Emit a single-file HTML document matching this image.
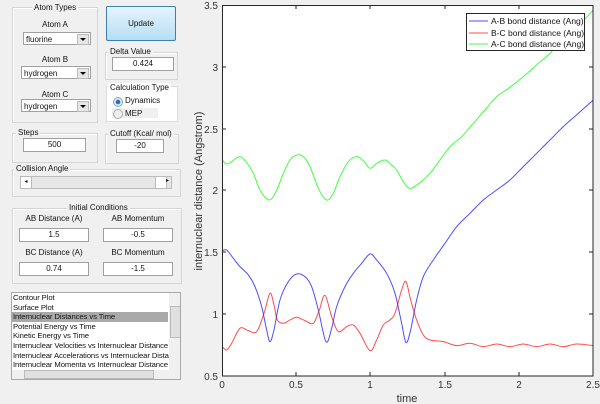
<!DOCTYPE html>
<html><head><style>
body{margin:0;width:600px;height:404px;background:#f0f0f0;position:relative;overflow:hidden;font-family:"Liberation Sans",Arial,sans-serif;font-size:8px;color:#111}
.a{position:absolute}
.g{position:absolute;border:1px solid #d5d5d5;box-shadow:1px 1px 0 #fff inset}
.lg{position:absolute;background:#f0f0f0;padding:0 2px;font-size:8px;line-height:9px}
.inp{position:absolute;background:#fff;border:1px solid #a0a0a0;text-align:center;font-size:8px;line-height:12px;height:12px}
.sel{position:absolute;background:#fff;border:1px solid #a0a0a0;height:13px;font-size:8px;line-height:13px;padding-left:2px;box-sizing:border-box}
.sel b{position:absolute;right:1px;top:1px;width:10px;height:9px;background:#e6e6e6;border:1px solid #bbb}
.sel b:after{content:"";position:absolute;left:2px;top:3px;border:3px solid transparent;border-top:3px solid #000;border-bottom:0}
.c{position:absolute;text-align:center;font-size:8px}
</style></head><body>
<div class="g" style="left:12px;top:7px;width:84px;height:114px"></div>
<div class="lg" style="left:32px;top:3px">Atom Types</div>
<div class="c" style="left:12px;top:20px;width:86px">Atom A</div>
<div class="sel" style="left:23px;top:32px;width:68px">fluorine<b></b></div>
<div class="c" style="left:12px;top:55px;width:86px">Atom B</div>
<div class="sel" style="left:21px;top:66px;width:70px">hydrogen<b></b></div>
<div class="c" style="left:12px;top:90px;width:86px">Atom C</div>
<div class="sel" style="left:21px;top:99px;width:70px">hydrogen<b></b></div>
<div class="a" style="left:106px;top:6px;width:68px;height:33px;border:1px solid #3c7fb1;border-radius:2px;background:linear-gradient(#e5f4fc,#b6def5);text-align:center;line-height:33px;font-size:8px">Update</div>
<div class="g" style="left:105px;top:52px;width:71px;height:26px"></div>
<div class="lg" style="left:108px;top:47px">Delta Value</div>
<div class="inp" style="left:112px;top:57px;width:60px">0.424</div>
<div class="a" style="left:106px;top:86px;width:70px;height:34px;background:#fff;border:1px solid #ddd"></div>
<div class="a" style="left:108px;top:83px;background:#fff;padding:0 2px;line-height:9px">Calculation Type</div>
<div class="a" style="left:113px;top:97px;width:8px;height:8px;border-radius:50%;background:radial-gradient(#2a6fb5 35%,#dbe9f5 45%);border:1px solid #8aa"></div>
<div class="a" style="left:125px;top:96px">Dynamics</div>
<div class="a" style="left:112px;top:108px;width:46px;height:10px;background:#f0f0f0"></div>
<div class="a" style="left:113px;top:109px;width:8px;height:8px;border-radius:50%;background:#eee;border:1px solid #aaa"></div>
<div class="a" style="left:125px;top:109px">MEP</div>
<div class="g" style="left:12px;top:133px;width:84px;height:28px"></div>
<div class="lg" style="left:16px;top:128px">Steps</div>
<div class="inp" style="left:23px;top:138px;width:61px">500</div>
<div class="g" style="left:105px;top:134px;width:72px;height:28px"></div>
<div class="lg" style="left:108px;top:129px">Cutoff (Kcal/ mol)</div>
<div class="inp" style="left:116px;top:139px;width:46px">-20</div>
<div class="g" style="left:12px;top:169px;width:167px;height:26px"></div>
<div class="lg" style="left:14px;top:164px">Collision Angle</div>
<div class="a" style="left:20px;top:176px;width:150px;height:11px;background:#e6e6e6;border:1px solid #bbb"></div>
<div class="a" style="left:20px;top:176px;width:10px;height:11px;background:#fff;border:1px solid #bbb;font-size:6px;text-align:center;line-height:11px">◂</div>
<div class="a" style="left:155px;top:176px;width:10px;height:11px;background:#fff;border:1px solid #bbb"></div>
<div class="a" style="left:166px;top:176px;width:4px;height:11px;font-size:6px;line-height:11px">▸</div>
<div class="g" style="left:12px;top:208px;width:168px;height:74px"></div>
<div class="lg" style="left:67px;top:203px">Initial Conditions</div>
<div class="c" style="left:12px;top:214px;width:84px">AB Distance (A)</div>
<div class="c" style="left:96px;top:214px;width:84px">AB Momentum</div>
<div class="inp" style="left:19px;top:228px;width:68px">1.5</div>
<div class="inp" style="left:103px;top:228px;width:68px">-0.5</div>
<div class="c" style="left:12px;top:248px;width:84px">BC Distance (A)</div>
<div class="c" style="left:96px;top:248px;width:84px">BC Momentum</div>
<div class="inp" style="left:19px;top:262px;width:68px">0.74</div>
<div class="inp" style="left:103px;top:262px;width:68px">-1.5</div>
<div class="a" style="left:11px;top:292px;width:168px;height:86px;background:#fff;border:1px solid #a8a8a8;overflow:hidden;line-height:9.6px;font-size:7.7px;white-space:nowrap;letter-spacing:-0.1px">
<div style="padding-left:1px">Contour Plot</div>
<div style="padding-left:1px">Surface Plot</div>
<div style="padding-left:1px;background:#a9a9a9;width:155px">Internuclear Distances vs Time</div>
<div style="padding-left:1px">Potential Energy vs Time</div>
<div style="padding-left:1px">Kinetic Energy vs Time</div>
<div style="padding-left:1px">Internuclear Velocities vs Internuclear Distance</div>
<div style="padding-left:1px">Internuclear Accelerations vs Internuclear Dista</div>
<div style="padding-left:1px">Internuclear Momenta vs Internuclear Distance</div>
<div class="a" style="left:157px;top:0;width:11px;height:77px;background:#f0f0f0"></div>
<div class="a" style="left:158px;top:13px;width:9px;height:30px;background:#e0e0e0;border:1px solid #bbb"></div>
<div class="a" style="left:0;top:77px;width:168px;height:9px;background:#f0f0f0"></div>
<div class="a" style="left:12px;top:77px;width:128px;height:7px;background:#e0e0e0;border:1px solid #bbb"></div>
</div>
<div class="a" style="left:222px;top:5px;width:371px;height:371px;background:#fff"></div>
<svg class="a" style="left:0;top:0" width="600" height="404" viewBox="0 0 600 404">
<g transform="translate(190,0) scale(0.3333)" fill="none" stroke-width="3" stroke-linejoin="round">
<path class="cv" stroke="#0000ff" stroke-opacity="0.7" d="M97,752 L110,750 L130,775 L150,800 L175,825 L195,860 L215,920 L230,990 L240,1025 L252,990 L270,900 L295,845 L320,822 L345,830 L365,860 L385,930 L408,1025 L425,985 L440,920 L465,860 L490,820 L515,790 L540,762 L560,780 L590,820 L615,880 L635,970 L648,1028 L662,990 L680,900 L700,830 L730,780 L765,730 L800,680 L840,640 L880,600 L920,570 L960,540 L1000,500 L1040,460 L1080,420 L1120,380 L1165,340 L1210,300"/>
<path class="cv" stroke="#ff0000" stroke-opacity="0.7" d="M97,1040 L110,1050 L125,1030 L150,985 L175,992 L200,995 L222,940 L240,880 L252,915 L262,960 L280,970 L300,960 L320,952 L345,962 L370,970 L388,930 L405,886 L425,950 L445,995 L470,980 L490,975 L510,1000 L540,1052 L560,1020 L580,975 L600,960 L615,940 L635,870 L648,845 L662,900 L680,960 L700,1005 L720,1020 L760,1025 L800,1037 L840,1030 L880,1040 L920,1032 L960,1040 L1000,1032 L1040,1040 L1080,1032 L1120,1040 L1160,1032 L1210,1037"/>
<path class="cv" stroke="#00ff00" stroke-opacity="0.75" d="M97,480 L110,492 L125,485 L150,470 L170,488 L190,520 L210,570 L237,600 L258,575 L280,520 L300,480 L320,465 L340,470 L360,500 L385,565 L410,600 L430,580 L450,530 L475,485 L500,470 L520,482 L540,505 L560,490 L585,480 L605,495 L620,510 L640,545 L660,565 L690,548 L720,520 L750,480 L780,440 L815,410 L850,370 L885,330 L920,290 L960,262 L1000,230 L1040,195 L1080,160 L1115,125 L1150,90 L1180,62 L1210,30"/>
</g>
<rect x="222.5" y="5.5" width="370.5" height="370.5" fill="none" stroke="#262626" stroke-width="1"/>
<g stroke="#262626">
<path d="M222,67 h4 M222,129 h4 M222,190 h4 M222,252 h4 M222,314 h4 M593,67 h-4 M593,129 h-4 M593,190 h-4 M593,252 h-4 M593,314 h-4 M296,376 v-4 M370,376 v-4 M445,376 v-4 M519,376 v-4 M296,5 v4 M370,5 v4 M445,5 v4 M519,5 v4"/>
</g>
<rect x="466.5" y="13.5" width="118" height="37" fill="#fff" stroke="#262626"/>
<path d="M469,21 h19" stroke="#0000ff" stroke-opacity="0.7"/>
<path d="M469,33 h19" stroke="#ff0000" stroke-opacity="0.7"/>
<path d="M469,44 h19" stroke="#00ff00" stroke-opacity="0.75"/>
<g font-family="Liberation Sans,Arial,sans-serif" font-size="8.5" fill="#111">
<text x="491" y="24">A-B bond distance (Ang)</text>
<text x="491" y="36">B-C bond distance (Ang)</text>
<text x="491" y="47">A-C bond distance (Ang)</text>
</g>
<g font-family="Liberation Sans,Arial,sans-serif" font-size="10" fill="#333" text-anchor="end">
<text x="218" y="9">3.5</text><text x="218" y="71">3</text><text x="218" y="133">2.5</text><text x="218" y="194">2</text><text x="218" y="256">1.5</text><text x="218" y="318">1</text><text x="218" y="380">0.5</text>
</g>
<g font-family="Liberation Sans,Arial,sans-serif" font-size="10" fill="#333" text-anchor="middle">
<text x="222" y="388">0</text><text x="296" y="388">0.5</text><text x="370" y="388">1</text><text x="445" y="388">1.5</text><text x="519" y="388">2</text><text x="593" y="388">2.5</text>
<text x="407" y="402" font-size="11">time</text>
<text transform="translate(202,191) rotate(-90)" font-size="11">internuclear distance (Angstrom)</text>
</g>
</svg>
<script>
document.querySelectorAll('.cv').forEach(function(p){
var pts=p.getAttribute('d').replace(/[ML]/g,' ').trim().split(/\s+/).map(function(s){return s.split(',').map(Number);});
var d='M'+pts[0][0]+','+pts[0][1];
for(var i=0;i<pts.length-1;i++){
var p0=pts[Math.max(i-1,0)],p1=pts[i],p2=pts[i+1],p3=pts[Math.min(i+2,pts.length-1)];
var c1x=p1[0]+(p2[0]-p0[0])/6,c1y=p1[1]+(p2[1]-p0[1])/6,c2x=p2[0]-(p3[0]-p1[0])/6,c2y=p2[1]-(p3[1]-p1[1])/6;
d+=' C'+c1x.toFixed(1)+','+c1y.toFixed(1)+' '+c2x.toFixed(1)+','+c2y.toFixed(1)+' '+p2[0]+','+p2[1];}
p.setAttribute('d',d);});
</script>
</body></html>
